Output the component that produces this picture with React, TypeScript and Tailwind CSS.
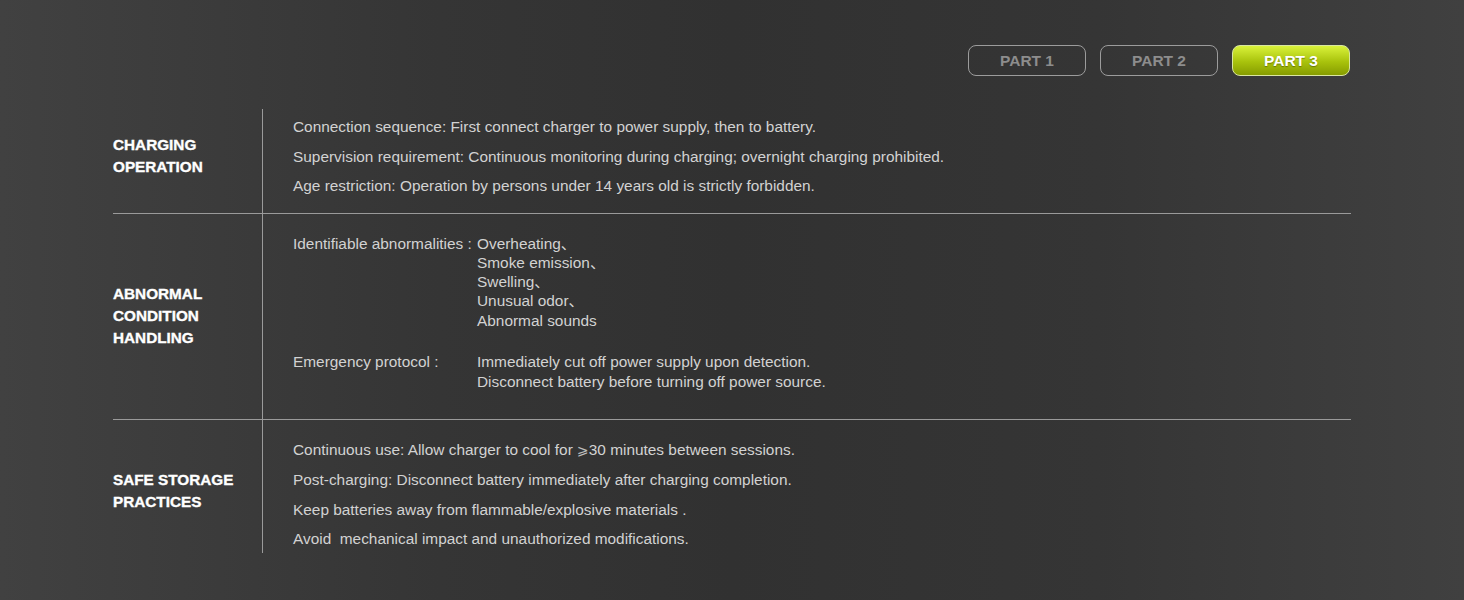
const labelCls =
  "text-[15.3px] font-bold leading-[22px] text-white uppercase [-webkit-text-stroke:0.35px_#ffffff]";

function PartButton({ label, active }: { label: string; active?: boolean }) {
  if (active) {
    return (
      <div className="flex h-[31px] w-[118px] items-center justify-center rounded-[8px] border border-[#d9e6a0] bg-[linear-gradient(to_bottom,#d9f23a,#a8c20c_55%,#869c00)] text-[15.5px] font-bold text-white [text-shadow:0_1px_1px_rgba(0,0,0,0.35)]">
        {label}
      </div>
    );
  }
  return (
    <div className="flex h-[31px] w-[118px] items-center justify-center rounded-[8px] border-[1.5px] border-[#9c9c9c] text-[15.5px] font-bold text-[#8d8d8d]">
      {label}
    </div>
  );
}

export default function App() {
  return (
    <div className="h-[600px] w-[1464px] overflow-hidden bg-[linear-gradient(to_right,#414141,#353535_30%,#313131_50%,#353535_75%,#404040)] px-[113px] pt-[45px] font-['Liberation_Sans','Noto_Sans_CJK_SC',sans-serif] text-[15.4px] text-[#d2d2d2]">
      {/* part tabs */}
      <div className="flex justify-end gap-[14px] pr-[1px]">
        <PartButton label="PART 1" />
        <PartButton label="PART 2" />
        <PartButton label="PART 3" active />
      </div>

      <div className="mt-[33px]">
        {/* charging operation */}
        <div className="grid grid-cols-[150px_1fr]">
          <div className="flex items-center border-r-[1.5px] border-[#9a9a9a] pb-[10px]">
            <p className={labelCls}>
              CHARGING
              <br />
              OPERATION
            </p>
          </div>
          <div className="pl-[30px] pt-[3px] pb-[12px] leading-[29.5px]">
            <p>Connection sequence: First connect charger to power supply, then to battery.</p>
            <p>Supervision requirement: Continuous monitoring during charging; overnight charging prohibited.</p>
            <p>Age restriction: Operation by persons under 14 years old is strictly forbidden.</p>
          </div>
        </div>

        {/* abnormal condition */}
        <div className="grid grid-cols-[150px_1fr] border-t-[1.5px] border-[#9a9a9a]">
          <div className="flex items-center border-r-[1.5px] border-[#9a9a9a]">
            <p className={labelCls}>
              ABNORMAL
              <br />
              CONDITION
              <br />
              HANDLING
            </p>
          </div>
          <div className="pl-[30px] pt-[20px] pb-[27px]">
            <div className="grid grid-cols-[184px_1fr] leading-[19.3px]">
              <p>Identifiable abnormalities :</p>
              <div>
                <p>Overheating、</p>
                <p>Smoke emission、</p>
                <p>Swelling、</p>
                <p>Unusual odor、</p>
                <p>Abnormal sounds</p>
              </div>
            </div>
            <div className="mt-[22px] grid grid-cols-[184px_1fr] leading-[20px]">
              <p>Emergency protocol :</p>
              <div>
                <p>Immediately cut off power supply upon detection.</p>
                <p>Disconnect battery before turning off power source.</p>
              </div>
            </div>
          </div>
        </div>

        {/* safe storage */}
        <div className="grid grid-cols-[150px_1fr] border-t-[1.5px] border-[#9a9a9a]">
          <div className="flex items-center border-r-[1.5px] border-[#9a9a9a] pt-[8px]">
            <p className={labelCls}>
              SAFE STORAGE
              <br />
              PRACTICES
            </p>
          </div>
          <div className="pl-[30px] pt-[15px] leading-[29.3px]">
            <p>
              Continuous use: Allow charger to cool for{" "}
              <span className="font-['DejaVu_Sans',sans-serif] text-[14px] text-[#bdbdbd]">⩾</span>30 minutes between sessions.
            </p>
            <p>Post-charging: Disconnect battery immediately after charging completion.</p>
            <p>Keep batteries away from flammable/explosive materials .</p>
            <p className="whitespace-pre">Avoid  mechanical impact and unauthorized modifications.</p>
          </div>
        </div>
      </div>
    </div>
  );
}
